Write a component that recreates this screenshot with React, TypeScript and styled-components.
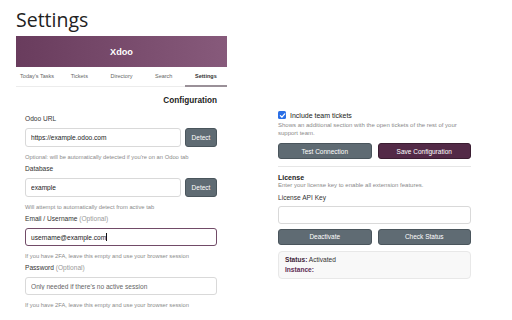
import React from "react";
import styled, { createGlobalStyle } from "styled-components";

const Global = createGlobalStyle`
  html, body { margin: 0; padding: 0; background: #ffffff; }
  body { font-family: "Liberation Sans", Arial, sans-serif; color: #222; }
  * { box-sizing: border-box; }
`;

const Page = styled.div`
  width: 512px;
  height: 320px;
  padding: 7px 0 0 16px;
  overflow: hidden;
`;

const Title = styled.h1`
  margin: 0;
  font-family: "Open Sans", sans-serif;
  font-weight: 400;
  font-size: 19.5px;
  line-height: 26px;
  color: #222;
`;

const Columns = styled.div`
  display: grid;
  grid-template-columns: 211px 193px;
  column-gap: 51px;
  margin-top: 3px;
`;

const Popup = styled.div`
  display: flex;
  flex-direction: column;
`;

const Header = styled.div`
  height: 31px;
  background: linear-gradient(90deg, #693c5d 0%, #875a7b 100%);
  display: flex;
  align-items: center;
  justify-content: center;
  color: #fff;
  font-weight: 700;
  font-size: 9.2px;
`;

const Tabs = styled.div`
  display: flex;
  height: 20px;
  border-bottom: 1px solid #ececec;
`;

const Tab = styled.div<{ $active?: boolean }>`
  flex: 1;
  display: flex;
  align-items: center;
  justify-content: center;
  font-size: 5.5px;
  color: ${(p) => (p.$active ? "#333" : "#666")};
  font-weight: ${(p) => (p.$active ? 700 : 400)};
  border-bottom: 2px solid ${(p) => (p.$active ? "#9a9098" : "transparent")};
  margin-bottom: -1px;
`;

const Form = styled.div`
  padding: 8px 10px 0 9px;
  display: flex;
  flex-direction: column;
`;

const SectionTitle = styled.div`
  text-align: right;
  font-weight: 700;
  font-size: 8.2px;
  line-height: 12px;
  color: #222;
  margin-bottom: 7px;
`;

const Field = styled.div`
  display: flex;
  flex-direction: column;
  margin-bottom: 3px;
`;

const Label = styled.div`
  font-size: 6.6px;
  line-height: 10px;
  color: #333;
  margin-bottom: 4px;
`;

const Optional = styled.span`
  color: #999;
`;

const InputRow = styled.div`
  display: flex;
  gap: 4px;
`;

const TextInput = styled.input<{ $h?: number }>`
  flex: 1;
  min-width: 0;
  height: ${(p) => p.$h ?? 18}px;
  border: 1px solid #d9d9d9;
  border-radius: 3px;
  padding: 0 5px;
  font-family: "Liberation Sans", Arial, sans-serif;
  font-size: 6.6px;
  color: #222;
  background: #fff;
  outline: none;
  &::placeholder { color: #666; }
`;

const FocusedInput = styled.div`
  flex: 1;
  height: 18px;
  border: 1px solid #714b67;
  border-radius: 3px;
  padding: 0 5px;
  font-size: 6.6px;
  color: #222;
  display: flex;
  align-items: center;
`;

const Caret = styled.span`
  display: inline-block;
  width: 1px;
  height: 8px;
  background: #111;
`;

const Button = styled.button<{ $primary?: boolean }>`
  flex: 1;
  height: 16px;
  border: 1px solid ${(p) => (p.$primary ? "#3a1d31" : "#4a555c")};
  border-radius: 3px;
  background: ${(p) => (p.$primary ? "#532a47" : "#5f6b73")};
  color: #fff;
  font-family: "Liberation Sans", Arial, sans-serif;
  font-size: 6.5px;
  padding: 0;
  display: flex;
  align-items: center;
  justify-content: center;
`;

const DetectButton = styled(Button)`
  flex: 0 0 32px;
  height: 19px;
`;

const Help = styled.div`
  font-size: 5.8px;
  line-height: 8px;
  color: #8a8a8a;
  margin-top: 6px;
`;

const Side = styled.div`
  padding-top: 74px;
  display: flex;
  flex-direction: column;
`;

const CheckRow = styled.label`
  display: flex;
  align-items: center;
  gap: 4px;
  height: 10px;
  font-size: 7px;
  color: #222;
`;

const CheckBox = styled.span`
  width: 8px;
  height: 8px;
  border-radius: 1.5px;
  background: #2b6fe6;
  display: flex;
  align-items: center;
  justify-content: center;
`;

const Desc = styled.div<{ $mb?: number; $mt?: number }>`
  font-size: 6px;
  line-height: 7.5px;
  color: #8a8a8a;
  margin-top: ${(p) => p.$mt ?? 2}px;
  margin-bottom: ${(p) => p.$mb ?? 0}px;
`;

const ButtonRow = styled.div<{ $mt?: number }>`
  display: flex;
  gap: 6px;
  margin-top: ${(p) => p.$mt ?? 0}px;
`;

const Divider = styled.div`
  height: 1px;
  background: #e6e6e6;
  margin: 7px 0 6px;
`;

const SubTitle = styled.div`
  font-weight: 700;
  font-size: 7px;
  line-height: 9px;
  color: #222;
`;

const SideLabel = styled(Label)`
  margin-top: 3px;
  margin-bottom: 3px;
`;

const StatusBox = styled.div`
  margin-top: 6px;
  border: 1px solid #e8e8e8;
  background: #f8f8f8;
  border-radius: 4px;
  padding: 3px 6px;
  font-size: 6.6px;
  line-height: 10px;
  color: #333;
`;

const StatusKey = styled.span<{ $c?: string }>`
  font-weight: 700;
  color: ${(p) => p.$c ?? "#3f2539"};
`;

type FieldProps = {
  label: string;
  optional?: boolean;
  help: string;
  children: React.ReactNode;
};

const FormField = ({ label, optional, help, children }: FieldProps) => (
  <Field>
    <Label>
      {label}
      {optional && <Optional> (Optional)</Optional>}
    </Label>
    <InputRow>{children}</InputRow>
    <Help>{help}</Help>
  </Field>
);

const tabs = ["Today's Tasks", "Tickets", "Directory", "Search", "Settings"];

export default function App() {
  return (
    <>
      <Global />
      <Page>
        <Title>Settings</Title>
        <Columns>
          <Popup>
            <Header>Xdoo</Header>
            <Tabs>
              {tabs.map((t) => (
                <Tab key={t} $active={t === "Settings"}>
                  {t}
                </Tab>
              ))}
            </Tabs>
            <Form>
              <SectionTitle>Configuration</SectionTitle>
              <FormField
                label="Odoo URL"
                help="Optional: will be automatically detected if you're on an Odoo tab"
              >
                <TextInput $h={19} defaultValue="https://example.odoo.com" />
                <DetectButton>Detect</DetectButton>
              </FormField>
              <FormField
                label="Database"
                help="Will attempt to automatically detect from active tab"
              >
                <TextInput $h={19} defaultValue="example" />
                <DetectButton>Detect</DetectButton>
              </FormField>
              <FormField
                label="Email / Username"
                optional
                help="If you have 2FA, leave this empty and use your browser session"
              >
                <FocusedInput>
                  username@example.com
                  <Caret />
                </FocusedInput>
              </FormField>
              <FormField
                label="Password"
                optional
                help="If you have 2FA, leave this empty and use your browser session"
              >
                <TextInput placeholder="Only needed if there's no active session" />
              </FormField>
            </Form>
          </Popup>
          <Side>
            <CheckRow>
              <CheckBox>
                <svg width="7" height="7" viewBox="0 0 10 10">
                  <path
                    d="M2 5.2 L4.2 7.4 L8.2 2.6"
                    fill="none"
                    stroke="#fff"
                    strokeWidth="1.8"
                    strokeLinecap="round"
                    strokeLinejoin="round"
                  />
                </svg>
              </CheckBox>
              Include team tickets
            </CheckRow>
            <Desc $mb={6}>
              Shows an additional section with the open tickets of the rest of your
              <br />
              support team.
            </Desc>
            <ButtonRow>
              <Button>Test Connection</Button>
              <Button $primary>Save Configuration</Button>
            </ButtonRow>
            <Divider />
            <SubTitle>License</SubTitle>
            <Desc $mt={0}>Enter your license key to enable all extension features.</Desc>
            <SideLabel>License API Key</SideLabel>
            <InputRow>
              <TextInput />
            </InputRow>
            <ButtonRow $mt={5}>
              <Button>Deactivate</Button>
              <Button>Check Status</Button>
            </ButtonRow>
            <StatusBox>
              <div>
                <StatusKey>Status:</StatusKey> Activated
              </div>
              <div>
                <StatusKey $c="#5e2d53">Instance:</StatusKey>
              </div>
            </StatusBox>
          </Side>
        </Columns>
      </Page>
    </>
  );
}
